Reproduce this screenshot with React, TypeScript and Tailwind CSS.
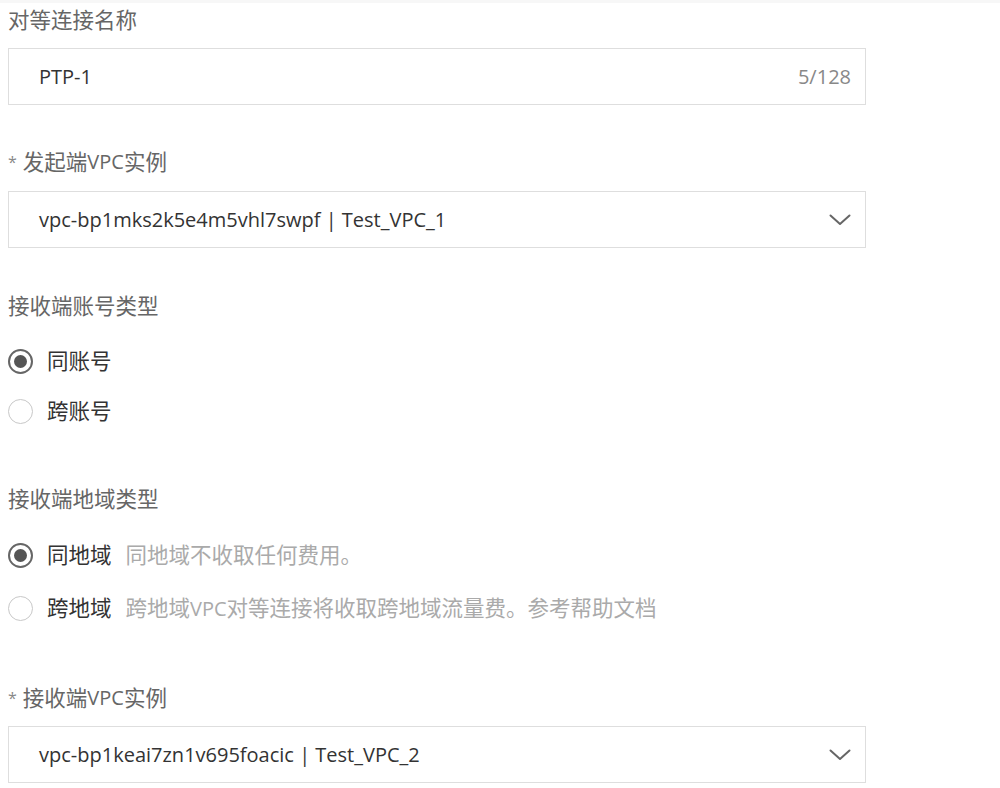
import React from "react";

const font = { fontFamily: '"Open Sans", "Noto Sans CJK SC", sans-serif' };

function T({ text }: { text: string }) {
  const parts = text.match(/[\u3000-\u9fff\uff00-\uffef]+|[^\u3000-\u9fff\uff00-\uffef]+/g) || [];
  return (
    <>
      {parts.map((p, i) =>
        /[\u3000-\u9fff\uff00-\uffef]/.test(p) ? (
          <span key={i} className="text-[21.5px]">{p}</span>
        ) : (
          <span key={i} className="text-[20px]">{p}</span>
        )
      )}
    </>
  );
}

function Chevron() {
  return (
    <svg width="22" height="12" viewBox="0 0 22 12" fill="none">
      <path d="M1.5 1.5 L11 10 L20.5 1.5" stroke="#666" strokeWidth="2" strokeLinecap="round" strokeLinejoin="round" />
    </svg>
  );
}

function Radio({ checked }: { checked?: boolean }) {
  return checked ? (
    <span className="flex h-[25px] w-[25px] items-center justify-center rounded-full border-2 border-[#666] bg-white">
      <span className="h-[13px] w-[13px] rounded-full bg-[#555]" />
    </span>
  ) : (
    <span className="h-[25px] w-[25px] rounded-full border-[1.5px] border-[#c8c8c8] bg-white" />
  );
}

function Label({ text, required }: { text: string; required?: boolean }) {
  return (
    <div className="flex h-[40px] items-center text-[20px] text-[#666]">
      {required && <span className="mr-[6px] text-[16px] text-[#888]">*</span>}
      <T text={text} />
    </div>
  );
}

function Select({ value }: { value: string }) {
  return (
    <div className="flex h-[57px] w-[858px] items-center justify-between border border-[#dedede] bg-white pl-[30px] pr-[14px] text-[20px] text-[#333]">
      <span>{value}</span>
      <Chevron />
    </div>
  );
}

function RadioRow({ checked, label, desc }: { checked?: boolean; label: string; desc?: string }) {
  return (
    <div className="flex h-[50px] items-center">
      <Radio checked={checked} />
      <span className="ml-[14px] text-[#333]">
        <T text={label} />
      </span>
      {desc && (
        <span className="ml-[14px] text-[#aaa]">
          <T text={desc} />
        </span>
      )}
    </div>
  );
}

export default function App() {
  return (
    <div className="h-[788px] w-[1000px] bg-white" style={font}>
      <div className="h-[3px] bg-[#f7f7f7]" />
      <div className="flex flex-col pl-[8px]">
        <div className="-mt-[3px]">
          <Label text="对等连接名称" />
        </div>
        <div className="mt-[8px] flex h-[57px] w-[858px] items-center justify-between border border-[#dedede] bg-white pl-[30px] pr-[14px] text-[20px]">
          <span className="text-[#333]">PTP-1</span>
          <span className="text-[#888]">5/128</span>
        </div>
        <div className="mt-[37px]">
          <Label text="发起端VPC实例" required />
        </div>
        <div className="mt-[9px]">
          <Select value="vpc-bp1mks2k5e4m5vhl7swpf | Test_VPC_1" />
        </div>
        <div className="mt-[38px]">
          <Label text="接收端账号类型" />
        </div>
        <div className="mt-[10px]">
          <RadioRow checked label="同账号" />
          <RadioRow label="跨账号" />
        </div>
        <div className="mt-[43px]">
          <Label text="接收端地域类型" />
        </div>
        <div className="mt-[11px] flex flex-col gap-[3px]">
          <RadioRow checked label="同地域" desc="同地域不收取任何费用。" />
          <RadioRow label="跨地域" desc="跨地域VPC对等连接将收取跨地域流量费。参考帮助文档" />
        </div>
        <div className="mt-[45px]">
          <Label text="接收端VPC实例" required />
        </div>
        <div className="mt-[8px]">
          <Select value="vpc-bp1keai7zn1v695foacic | Test_VPC_2" />
        </div>
      </div>
    </div>
  );
}
